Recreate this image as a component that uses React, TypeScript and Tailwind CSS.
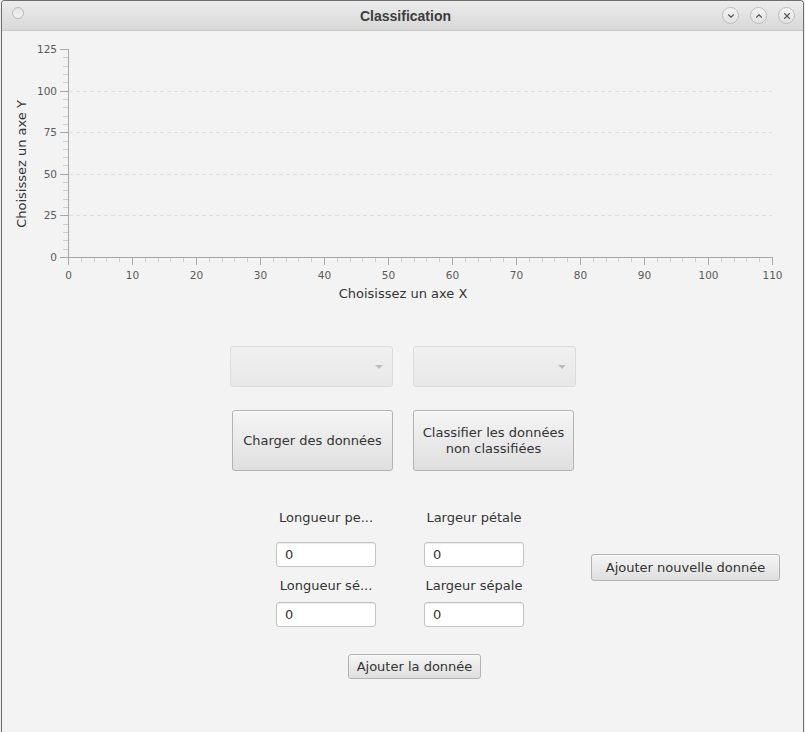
import { ChevronDown, ChevronUp, X } from 'lucide-react';

const yToPx = (v: number) => 257 - v * 1.664;
const xToPx = (u: number) => 68 + u * 6.4;

const yTicks = Array.from({ length: 26 }, (_, i) => i * 5);
const xTicks = Array.from({ length: 56 }, (_, i) => i * 2);

function Chart() {
  return (
    <svg width={801} height={280} viewBox="2 31 801 280" className="block font-['DejaVu_Sans',sans-serif]">
      {/* horizontal grid */}
      {[25, 50, 75, 100].map((v) => (
        <line
          key={v}
          x1={69}
          x2={772}
          y1={Math.round(yToPx(v)) + 0.5}
          y2={Math.round(yToPx(v)) + 0.5}
          stroke="#dedede"
          strokeDasharray="4 3"
        />
      ))}

      {/* y axis */}
      {yTicks.map((v) => {
        const y = Math.round(yToPx(v)) + 0.5;
        const major = v % 25 === 0;
        return (
          <g key={v}>
            <line x1={major ? 60 : 63} x2={68} y1={y} y2={y} stroke={major ? '#a8a8a8' : '#cfcfcf'} />
            {major && (
              <text x={57} y={y + 3.6} textAnchor="end" fontSize={10.5} fill="#5a5a5a">
                {v}
              </text>
            )}
          </g>
        );
      })}
      <line x1={68.5} x2={68.5} y1={49} y2={257.5} stroke="#a8a8a8" />

      {/* x axis */}
      {xTicks.map((u) => {
        const x = Math.round(xToPx(u)) + 0.5;
        const major = u % 10 === 0;
        return (
          <g key={u}>
            <line x1={x} x2={x} y1={257} y2={major ? 265 : 262} stroke={major ? '#a8a8a8' : '#cfcfcf'} />
            {major && (
              <text x={x} y={278.5} textAnchor="middle" fontSize={10.5} fill="#5a5a5a">
                {u}
              </text>
            )}
          </g>
        );
      })}
      <line x1={68} x2={772.5} y1={257.5} y2={257.5} stroke="#a8a8a8" />

      <text
        x={21}
        y={164}
        transform="rotate(-90 21 164)"
        textAnchor="middle"
        dominantBaseline="central"
        fontSize={13}
        fill="#333"
      >
        Choisissez un axe Y
      </text>
      <text x={403} y={297.5} textAnchor="middle" fontSize={13} fill="#333">
        Choisissez un axe X
      </text>
    </svg>
  );
}

function Combo() {
  return (
    <div className="flex h-[41px] w-[163px] items-center justify-end rounded-[3px] border border-[#dcdcdc] bg-gradient-to-b from-[#f0f0f0] to-[#e8e8e8] pr-[9px]">
      <div className="h-0 w-0 border-x-[4px] border-t-[4px] border-x-transparent border-t-[#bdbdbd]" />
    </div>
  );
}

function FxButton({ children, className = '' }: { children: React.ReactNode; className?: string }) {
  return (
    <button
      className={`flex items-center justify-center rounded-[3px] border border-[#b3b3b3] bg-gradient-to-b from-[#f5f5f5] to-[#dfdfdf] text-center text-[13px] leading-[16px] text-[#333] shadow-[inset_0_1px_0_#fbfbfb] ${className}`}
    >
      {children}
    </button>
  );
}

function Field() {
  return (
    <div className="flex h-[25px] w-[100px] items-center rounded-[3px] border border-[#c4c4c4] bg-white pl-[8px] text-[13px] text-[#333] shadow-[inset_0_1px_1px_#ececec]">
      0
    </div>
  );
}

function TitleButton({ children }: { children: React.ReactNode }) {
  return (
    <div className="flex h-[17px] w-[17px] items-center justify-center rounded-full border border-[#bdbdbd] bg-gradient-to-b from-[#f4f4f4] to-[#e2e2e2] text-[#555]">
      {children}
    </div>
  );
}

export default function App() {
  return (
    <div className="h-[732px] w-[805px] overflow-hidden bg-[#ececec] font-['DejaVu_Sans',sans-serif]">
      <div className="ml-[1px] flex h-[732px] w-[803px] flex-col overflow-hidden rounded-t-[4px] border-x border-t border-[#6e6e6e] bg-[#f3f3f3]">
        {/* Title bar */}
        <div className="relative flex h-[30px] shrink-0 items-center justify-center border-b border-[#c9c9c9] bg-gradient-to-b from-[#ececec] to-[#d8d8d8]">
          <div className="absolute left-[10px] top-[6px] h-[12px] w-[12px] rounded-full border border-[#b9b9b9] bg-gradient-to-b from-[#e4e4e4] to-[#f2f2f2]" />
          <span className="pl-[6px] pt-[1px] font-['Liberation_Sans',sans-serif] text-[14px] font-bold text-[#3c3c3c]">
            Classification
          </span>
          <div className="absolute right-[8px] top-[6px] flex gap-[11px]">
            <TitleButton>
              <ChevronDown size={10} strokeWidth={2.6} />
            </TitleButton>
            <TitleButton>
              <ChevronUp size={10} strokeWidth={2.6} />
            </TitleButton>
            <TitleButton>
              <X size={10} strokeWidth={2.6} />
            </TitleButton>
          </div>
        </div>

        <Chart />

        {/* Axis selectors */}
        <div className="mt-[35px] flex justify-center gap-[20px] pl-[1px]">
          <Combo />
          <Combo />
        </div>

        {/* Actions */}
        <div className="mt-[23px] flex gap-[20px] pl-[230px]">
          <FxButton className="h-[61px] w-[161px]">Charger des données</FxButton>
          <FxButton className="h-[61px] w-[161px]">
            Classifier les données
            <br />
            non classifiées
          </FxButton>
        </div>

        {/* New data form */}
        <div className="mt-[39px] flex items-start pl-[274px]">
          <div className="grid grid-cols-[100px_100px] gap-x-[48px] text-[13px] leading-[16px] text-[#333]">
            <div className="truncate text-center">Longueur pe...</div>
            <div className="text-center">Largeur pétale</div>
            <div className="mt-[16px]">
              <Field />
            </div>
            <div className="mt-[16px]">
              <Field />
            </div>
            <div className="mt-[11px] text-center">Longueur sé...</div>
            <div className="mt-[11px] text-center">Largeur sépale</div>
            <div className="mt-[8px]">
              <Field />
            </div>
            <div className="mt-[8px]">
              <Field />
            </div>
          </div>
          <FxButton className="ml-[67px] mt-[44px] h-[27px] w-[189px]">Ajouter nouvelle donnée</FxButton>
        </div>

        <div className="mt-[27px] pl-[346px]">
          <FxButton className="h-[25px] w-[133px]">Ajouter la donnée</FxButton>
        </div>
      </div>
    </div>
  );
}
